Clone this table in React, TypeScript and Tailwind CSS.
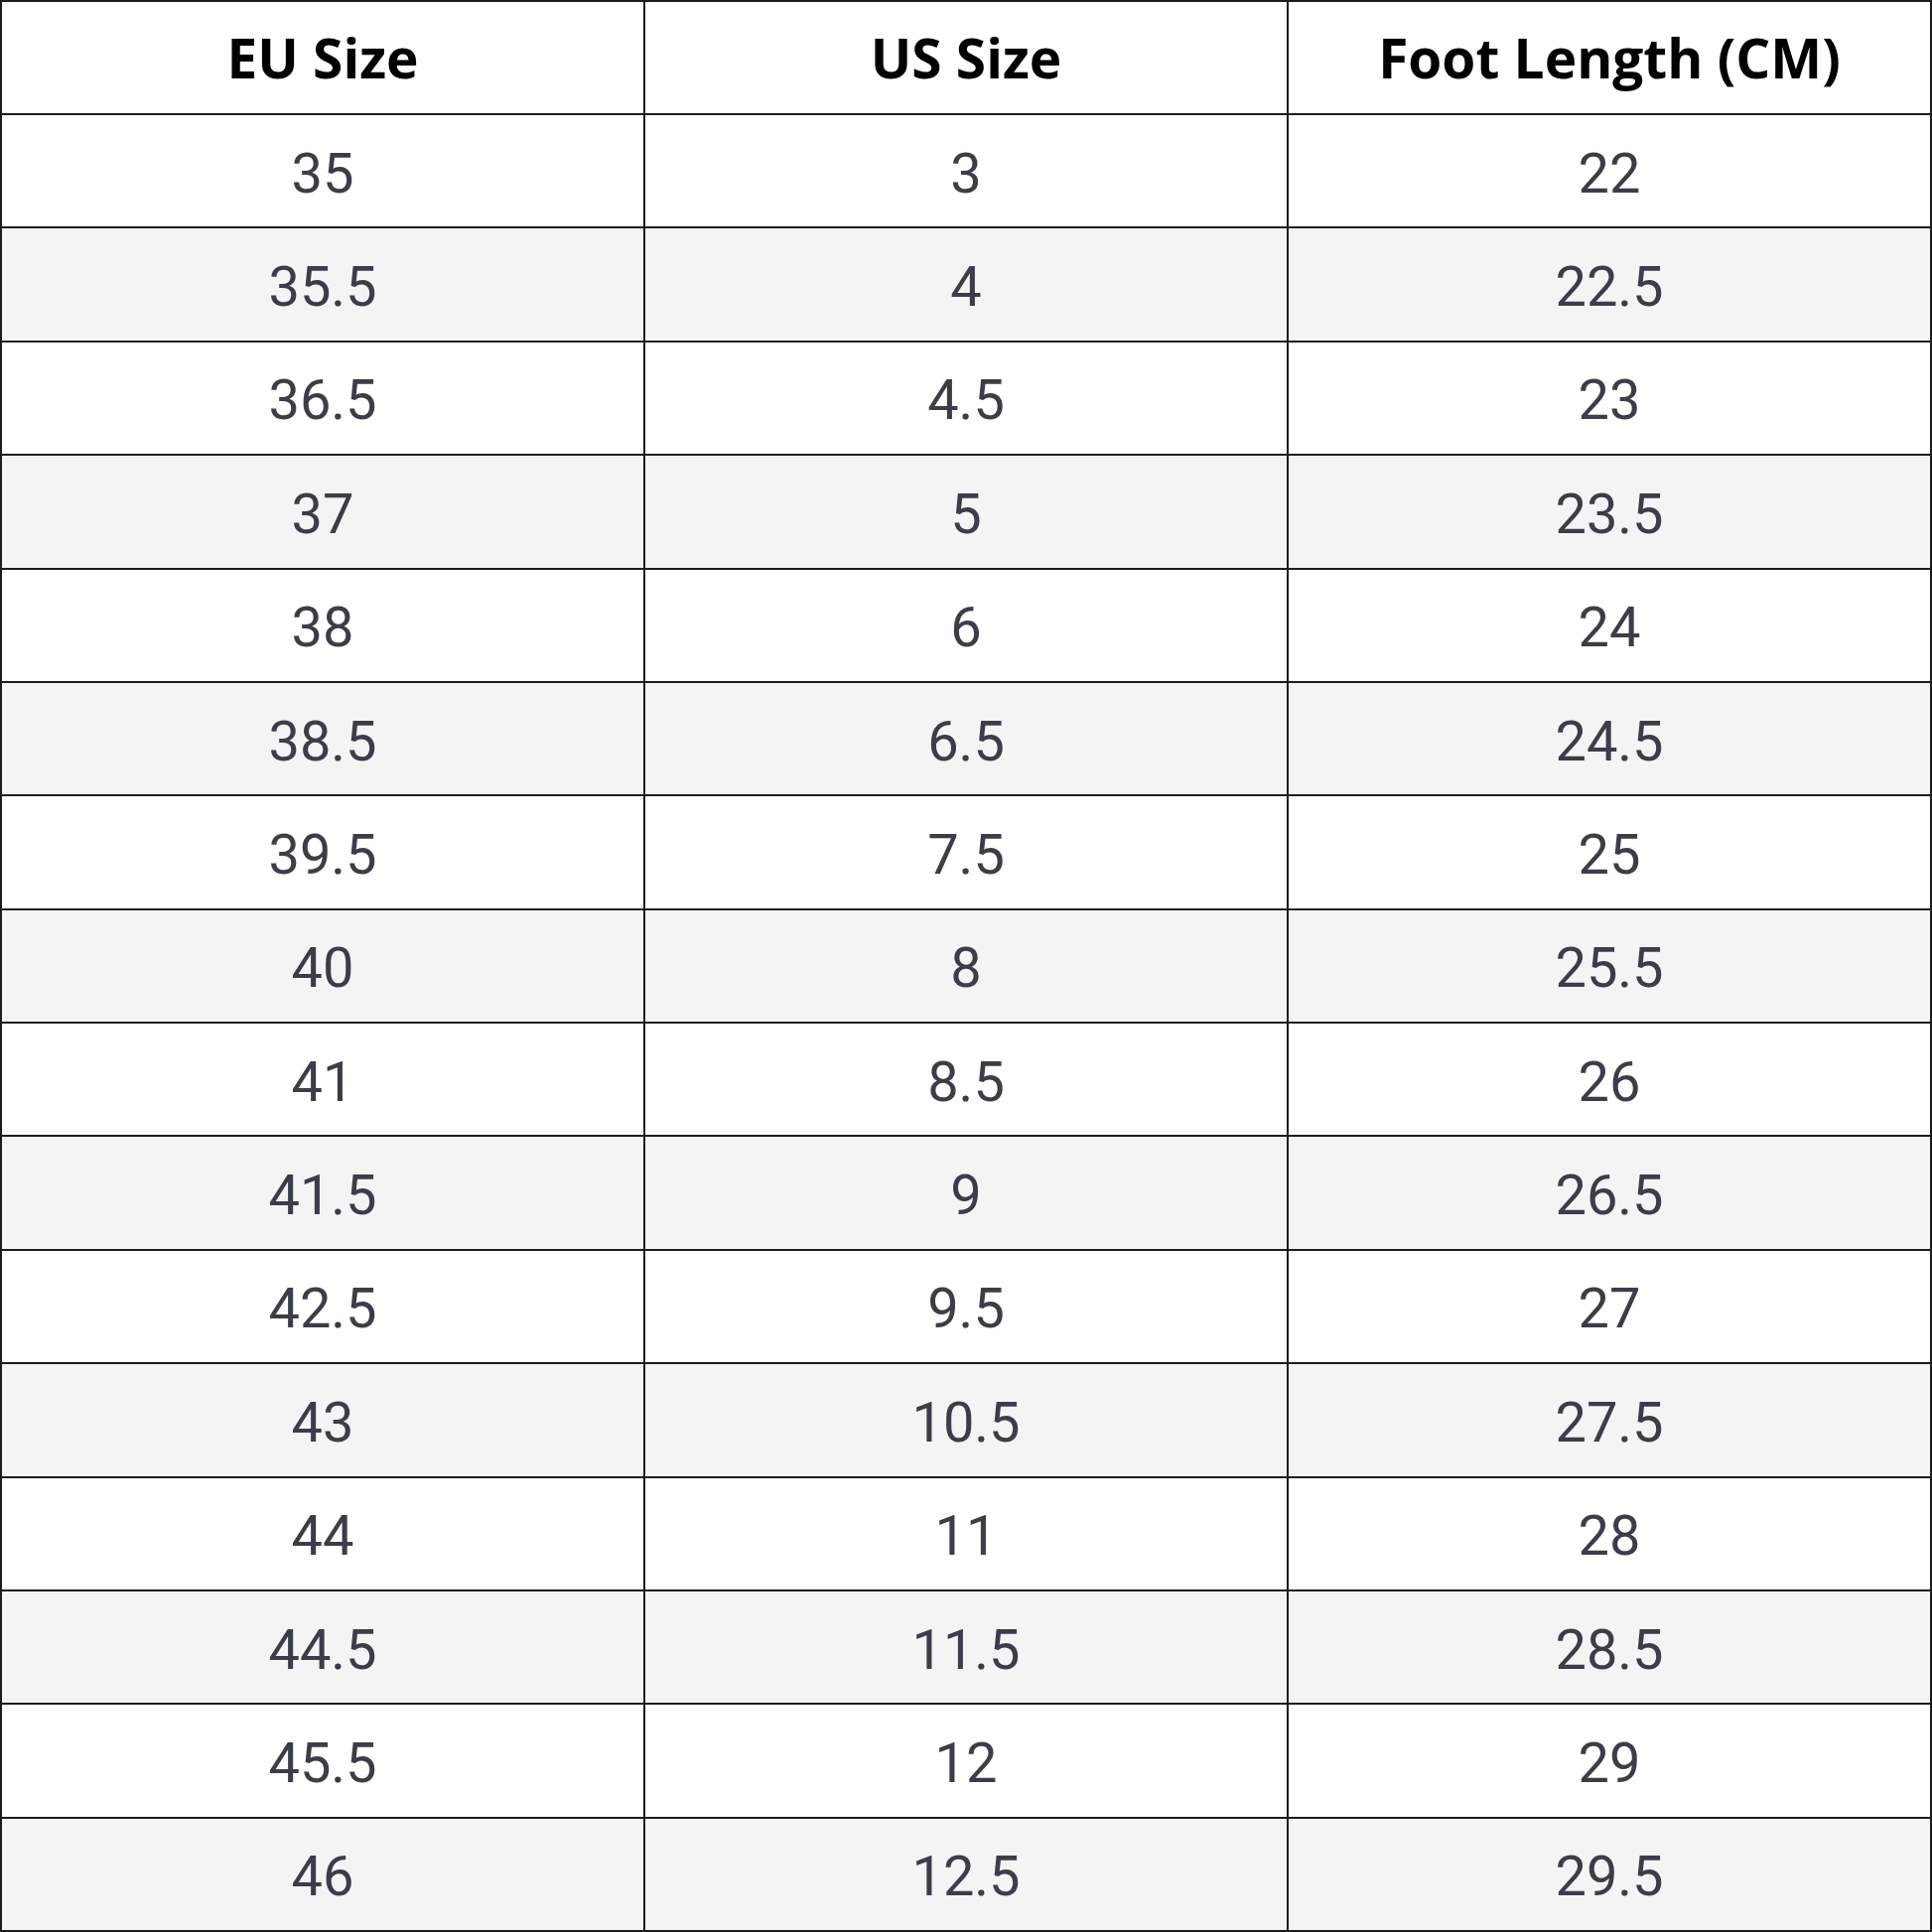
const rows: [string, string, string][] = [
  ["35", "3", "22"],
  ["35.5", "4", "22.5"],
  ["36.5", "4.5", "23"],
  ["37", "5", "23.5"],
  ["38", "6", "24"],
  ["38.5", "6.5", "24.5"],
  ["39.5", "7.5", "25"],
  ["40", "8", "25.5"],
  ["41", "8.5", "26"],
  ["41.5", "9", "26.5"],
  ["42.5", "9.5", "27"],
  ["43", "10.5", "27.5"],
  ["44", "11", "28"],
  ["44.5", "11.5", "28.5"],
  ["45.5", "12", "29"],
  ["46", "12.5", "29.5"],
];

const headers = ["EU Size", "US Size", "Foot Length (CM)"];

export default function App() {
  return (
    <div className="w-[1946px] h-[1946px] bg-white">
      <table className="w-full h-full table-fixed border-collapse">
        <thead>
          <tr className="h-[114px]">
            {headers.map((h) => (
              <th
                key={h}
                className="border-2 border-[#1c1c1c] text-center text-black font-bold text-[55px] font-['Open_Sans',sans-serif]"
              >
                {h}
              </th>
            ))}
          </tr>
        </thead>
        <tbody>
          {rows.map((r, i) => (
            <tr key={i} className={i % 2 === 1 ? "bg-[#f4f4f4] h-[114px]" : "bg-white h-[114px]"}>
              {r.map((v, j) => (
                <td
                  key={j}
                  className="border-2 border-[#1c1c1c] pt-[5px] text-center text-[#3b3d48] text-[56px] font-['Roboto',sans-serif] font-normal"
                >
                  {v}
                </td>
              ))}
            </tr>
          ))}
        </tbody>
      </table>
    </div>
  );
}
